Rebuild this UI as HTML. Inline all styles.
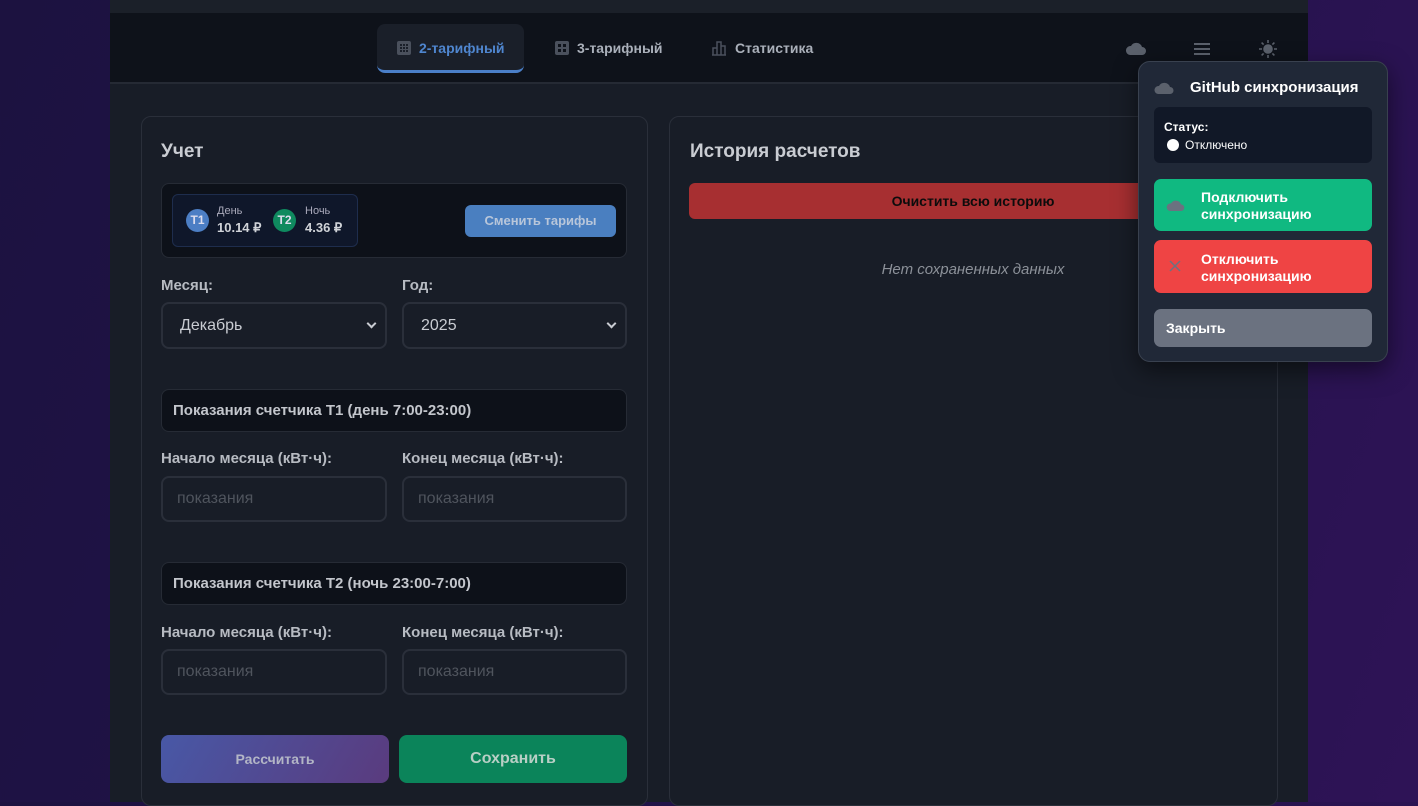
<!DOCTYPE html>
<html><head><meta charset="utf-8">
<style>
*{box-sizing:border-box;margin:0;padding:0}
body{width:1418px;height:802px;overflow:hidden;position:relative;font-family:"Liberation Sans","Noto Sans CJK SC",sans-serif;background:linear-gradient(110deg,#1c1240 0%,#22134a 50%,#2e1356 100%)}
.a{position:absolute}
.main{left:110px;top:0;width:1198px;height:802px;background:#181d27}
.top{left:110px;top:0;width:1198px;height:13px;background:#1b2029}
.nav{left:110px;top:13px;width:1198px;height:71px;background:#0e121a;border-bottom:2px solid #252a34}
.tab{font-size:14px;font-weight:bold;color:#aab0ba;display:flex;align-items:center;gap:8px}
.card{background:#181d27;border:1px solid #2a2f3a;border-radius:10px}
.h{font-size:19px;font-weight:bold;color:#c9ccd2}
.lbl{font-size:15px;font-weight:bold;color:#b7bbc2}
.inp{border:2px solid #2a2f3a;border-radius:8px;background:#181d27;font-size:16px;color:#8b9099;padding-left:14px;display:flex;align-items:center}
.sec{background:#0d1119;border:1px solid #262b35;border-radius:8px;font-size:15px;font-weight:bold;color:#c3c6cc;padding-left:11px;display:flex;align-items:center}
.chev{position:absolute;right:10px;top:16px;width:7px;height:7px;border-right:2px solid #c9ccd2;border-bottom:2px solid #c9ccd2;transform:rotate(45deg)}
.pop{left:1138px;top:61px;width:250px;height:301px;background:#202837;border:1px solid #39414f;border-radius:12px;box-shadow:0 8px 24px rgba(0,0,0,.5)}
.pb{border-radius:7px;font-size:14px;font-weight:bold;color:#fff;line-height:17px}
</style></head><body>
<div class="a main"></div>
<div class="a top"></div>
<div class="a nav"></div>
<div class="a" style="left:377px;top:24px;width:147px;height:49px;background:#1a1f29;border-radius:8px;border-bottom:3px solid #4a7fc8"></div>
<div class="a tab" style="left:397px;top:40px;color:#4f86cf"><svg width="14" height="14"><rect x="0" y="0" width="14" height="14" rx="2" fill="#4a505c"/><g fill="#1a1f29"><rect x="3" y="3" width="2" height="2"/><rect x="6" y="3" width="2" height="2"/><rect x="9" y="3" width="2" height="2"/><rect x="3" y="6" width="2" height="2"/><rect x="6" y="6" width="2" height="2"/><rect x="9" y="6" width="2" height="2"/><rect x="3" y="9" width="2" height="2"/><rect x="6" y="9" width="2" height="2"/><rect x="9" y="9" width="2" height="2"/></g></svg>2-тарифный</div>
<div class="a tab" style="left:555px;top:40px"><svg width="14" height="14"><rect width="14" height="14" rx="2" fill="#4a505c"/><g fill="#0e121a"><rect x="3" y="3" width="3" height="3"/><rect x="8" y="3" width="3" height="3"/><rect x="3" y="8" width="3" height="3"/><rect x="8" y="8" width="3" height="3"/></g></svg>3-тарифный</div>
<div class="a tab" style="left:711px;top:40px"><svg width="16" height="16" fill="none" stroke="#4a505c" stroke-width="1.5"><path d="M1 15h14M2 15V8h4v7M6 15V2h4v13M10 15V6h4v9"/></svg>Статистика</div>
<svg class="a" style="left:1125px;top:40px" width="22" height="16"><path d="M5 15h12a4 4 0 0 0 0-8 6 6 0 0 0-11-1A4.5 4.5 0 0 0 5 15z" fill="#5b616c"/></svg>
<div class="a" style="left:1194px;top:43px;width:16px;height:2px;background:#5b616c;box-shadow:0 5px 0 #5b616c,0 10px 0 #5b616c"></div>
<svg class="a" style="left:1258px;top:39px" width="20" height="20" stroke="#5b616c" stroke-width="1.6"><circle cx="10" cy="10" r="4" fill="#5b616c"/><path d="M10 1v3M10 16v3M1 10h3M16 10h3M3.6 3.6l2 2M14.4 14.4l2 2M3.6 16.4l2-2M14.4 5.6l2-2"/></svg>

<div class="a card" style="left:141px;top:116px;width:507px;height:690px"></div>
<div class="a h" style="left:161px;top:141px">Учет</div>
<div class="a" style="left:161px;top:183px;width:466px;height:75px;background:#0d1119;border:1px solid #262b35;border-radius:8px"></div>
<div class="a" style="left:172px;top:194px;width:186px;height:53px;background:#0f172a;border:1px solid #1e2d4d;border-radius:6px"></div>
<div class="a" style="left:186px;top:209px;width:23px;height:23px;border-radius:50%;background:#4c7ec4;color:#dde;font-size:12px;font-weight:bold;text-align:center;line-height:23px">T1</div>
<div class="a" style="left:217px;top:205px;font-size:11px;color:#aab">День</div>
<div class="a" style="left:217px;top:220px;font-size:13px;font-weight:bold;color:#d0d3d8">10.14 ₽</div>
<div class="a" style="left:273px;top:209px;width:23px;height:23px;border-radius:50%;background:#0f8a5f;color:#dde;font-size:12px;font-weight:bold;text-align:center;line-height:23px">T2</div>
<div class="a" style="left:305px;top:205px;font-size:11px;color:#aab">Ночь</div>
<div class="a" style="left:305px;top:220px;font-size:13px;font-weight:bold;color:#d0d3d8">4.36 ₽</div>
<div class="a" style="left:465px;top:205px;width:151px;height:32px;background:#4a7fc0;border-radius:6px;color:#b8c6da;font-size:13px;font-weight:bold;text-align:center;line-height:32px">Сменить тарифы</div>

<div class="a lbl" style="left:161px;top:277px">Месяц:</div>
<div class="a lbl" style="left:402px;top:277px">Год:</div>
<div class="a inp" style="left:161px;top:302px;width:226px;height:47px;color:#c9ccd2;padding-left:17px">Декабрь<span class="chev"></span></div>
<div class="a inp" style="left:402px;top:302px;width:225px;height:47px;color:#c9ccd2;padding-left:17px">2025<span class="chev"></span></div>

<div class="a sec" style="left:161px;top:389px;width:466px;height:43px">Показания счетчика T1 (день 7:00-23:00)</div>
<div class="a lbl" style="left:161px;top:450px">Начало месяца (кВт·ч):</div>
<div class="a lbl" style="left:402px;top:450px">Конец месяца (кВт·ч):</div>
<div class="a inp" style="left:161px;top:476px;width:226px;height:46px;color:#4f545d">показания</div>
<div class="a inp" style="left:402px;top:476px;width:225px;height:46px;color:#4f545d">показания</div>

<div class="a sec" style="left:161px;top:562px;width:466px;height:43px">Показания счетчика T2 (ночь 23:00-7:00)</div>
<div class="a lbl" style="left:161px;top:624px">Начало месяца (кВт·ч):</div>
<div class="a lbl" style="left:402px;top:624px">Конец месяца (кВт·ч):</div>
<div class="a inp" style="left:161px;top:649px;width:226px;height:46px;color:#4f545d">показания</div>
<div class="a inp" style="left:402px;top:649px;width:225px;height:46px;color:#4f545d">показания</div>

<div class="a" style="left:161px;top:735px;width:228px;height:48px;border-radius:8px;background:linear-gradient(120deg,#4858a6,#5a3b7e);color:#b3b6c6;font-size:14px;font-weight:bold;text-align:center;line-height:48px">Рассчитать</div>
<div class="a" style="left:399px;top:735px;width:228px;height:48px;border-radius:8px;background:#0b845a;color:#b8cfc5;font-size:16px;font-weight:bold;text-align:center;line-height:48px">Сохранить</div>

<div class="a card" style="left:669px;top:116px;width:609px;height:690px"></div>
<div class="a h" style="left:690px;top:141px">История расчетов</div>
<div class="a" style="left:689px;top:183px;width:568px;height:36px;background:#a72f31;border-radius:6px;color:#0c0c0c;font-size:14px;font-weight:bold;line-height:36px;text-align:center;padding-left:0">Очистить всю историю</div>
<div class="a" style="left:689px;top:261px;width:568px;text-align:center;font-size:15px;font-style:italic;color:#8c9199">Нет сохраненных данных</div>

<div class="a pop"></div>
<svg class="a" style="left:1153px;top:80px" width="22" height="15"><path d="M5 14h12a3.5 3.5 0 0 0 0-7 6 6 0 0 0-11-1A4 4 0 0 0 5 14z" fill="#5b616c"/></svg>
<div class="a" style="left:1190px;top:79px;font-size:15px;font-weight:bold;color:#fff">GitHub синхронизация</div>
<div class="a" style="left:1154px;top:107px;width:218px;height:56px;background:#111827;border-radius:6px"></div>
<div class="a" style="left:1164px;top:120px;font-size:12px;font-weight:bold;color:#fff">Статус:</div>
<div class="a" style="left:1167px;top:139px;width:12px;height:12px;border-radius:50%;background:#fff"></div>
<div class="a" style="left:1185px;top:138px;font-size:12px;color:#fff">Отключено</div>
<div class="a pb" style="left:1154px;top:179px;width:218px;height:52px;background:#10b981"></div>
<svg class="a" style="left:1165px;top:198px" width="21" height="14"><path d="M5 13h11a3.3 3.3 0 0 0 0-6.6 5.5 5.5 0 0 0-10-1A3.8 3.8 0 0 0 5 13z" fill="#6b7280"/></svg>
<div class="a pb" style="left:1201px;top:189px">Подключить<br>синхронизацию</div>
<div class="a pb" style="left:1154px;top:240px;width:218px;height:53px;background:#ef4444"></div>
<svg class="a" style="left:1169px;top:260px" width="12" height="12" stroke="#6b7280" stroke-width="1.5"><path d="M1 1l10 10M11 1L1 11"/></svg>
<div class="a pb" style="left:1201px;top:251px">Отключить<br>синхронизацию</div>
<div class="a pb" style="left:1154px;top:309px;width:218px;height:38px;background:#6b7280;line-height:38px;padding-left:12px">Закрыть</div>
</body></html>
